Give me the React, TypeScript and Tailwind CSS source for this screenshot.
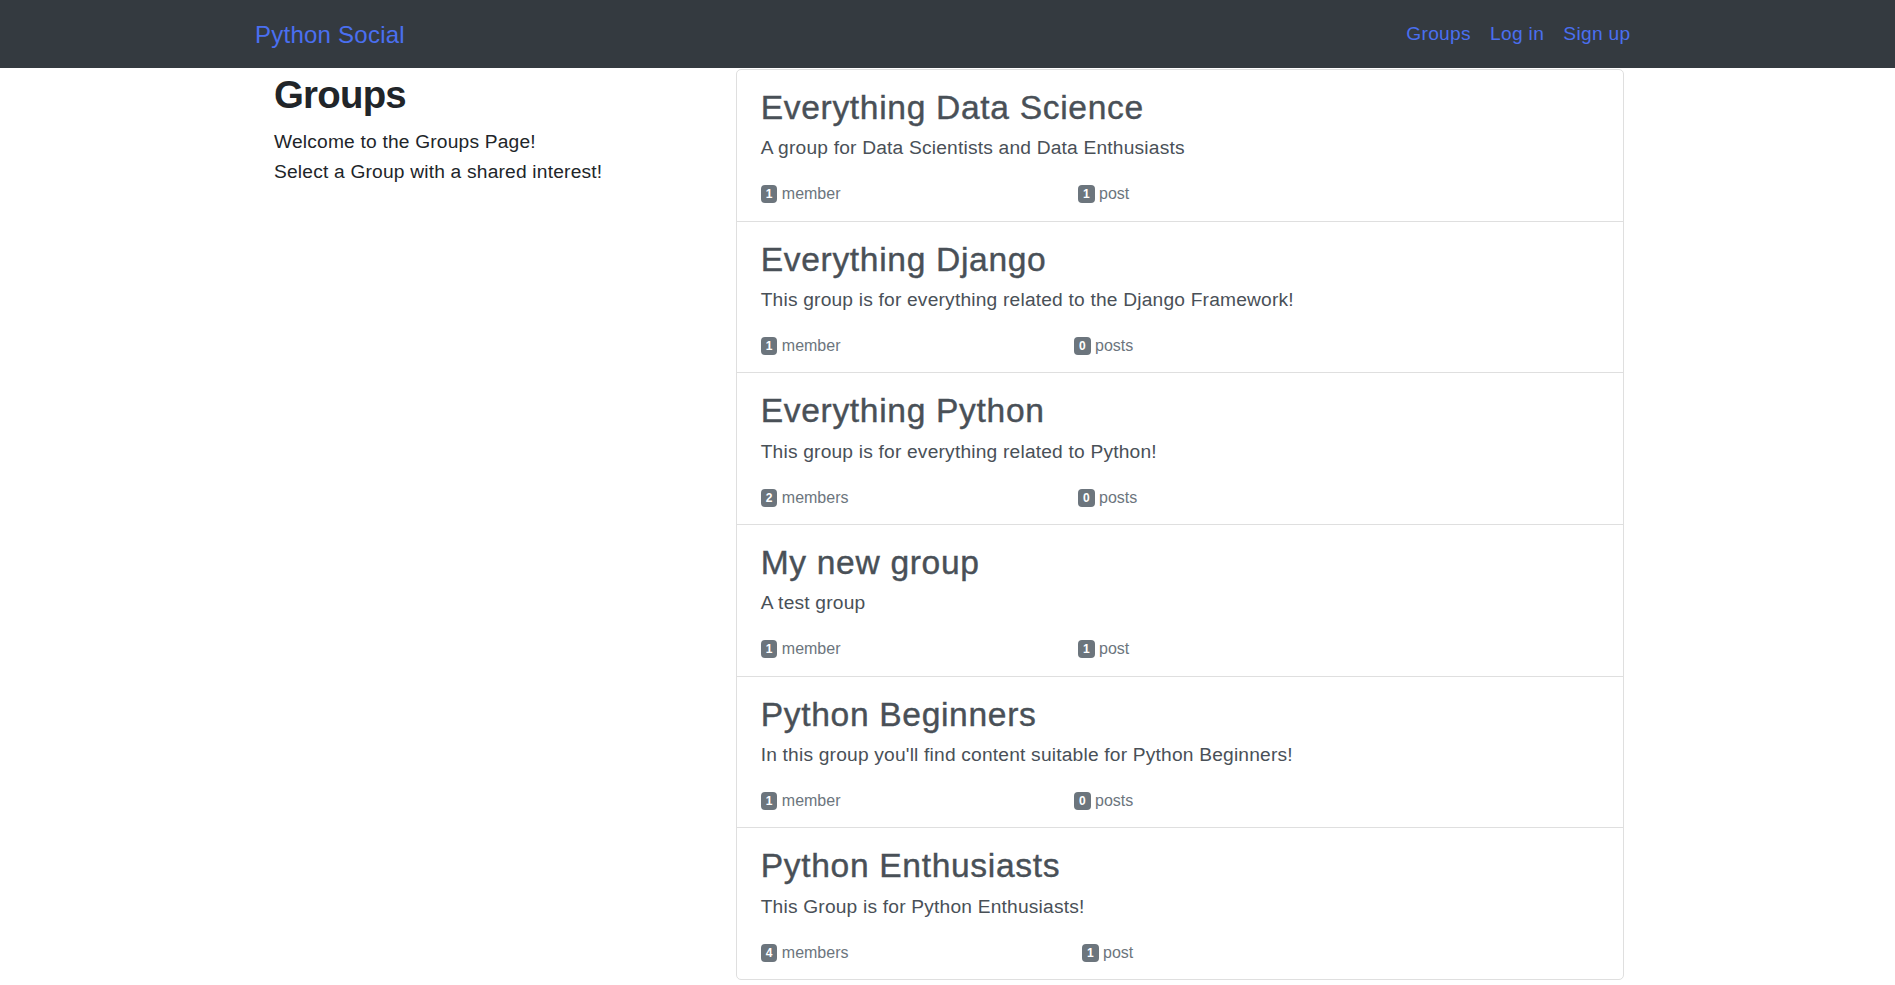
const groups = [
  { name: "Everything Data Science", about: "A group for Data Scientists and Data Enthusiasts", members: 1, posts: 1 },
  { name: "Everything Django", about: "This group is for everything related to the Django Framework!", members: 1, posts: 0 },
  { name: "Everything Python", about: "This group is for everything related to Python!", members: 2, posts: 0 },
  { name: "My new group", about: "A test group", members: 1, posts: 1 },
  { name: "Python Beginners", about: "In this group you'll find content suitable for Python Beginners!", members: 1, posts: 0 },
  { name: "Python Enthusiasts", about: "This Group is for Python Enthusiasts!", members: 4, posts: 1 },
];

function Count({ n, word }: { n: number; word: string }) {
  return (
    <span className="whitespace-nowrap">
      <span className="inline-block rounded-[4px] bg-[#6c757d] px-[5px] py-[3px] align-[1px] text-[12px] font-bold leading-none text-white">
        {n}
      </span>{" "}
      {word}
      {n === 1 ? "" : "s"}
    </span>
  );
}

export default function App() {
  return (
    <div className="min-h-screen bg-white font-['Liberation_Sans',Arial,sans-serif] text-[#212529]">
      <nav className="h-[68px] bg-[#343a40]">
        <div className="mx-auto flex h-full w-[1385px] items-center justify-between">
          <a href="#" className="pt-[1px] text-[24px] leading-[36px] tracking-[0.01em] text-[#4a6ff0]">
            Python Social
          </a>
          <ul className="flex pt-[1px] text-[19.2px] leading-[28.8px] tracking-[0.015em] text-[#4a6ff0]">
            <li><a href="#" className="block px-[9.6px]">Groups</a></li>
            <li><a href="#" className="block px-[9.6px]">Log in</a></li>
            <li><a href="#" className="block px-[9.6px]">Sign up</a></li>
          </ul>
        </div>
      </nav>

      <div className="mx-auto flex w-[1385px]">
        <div className="w-1/3 px-[19px] pt-[4px]">
          <h2 className="mb-[9px] text-[38.4px] font-bold leading-[1.2] tracking-[-0.02em]">Groups</h2>
          <p className="text-[19.2px] leading-[30px] tracking-[0.01em]">
            Welcome to the Groups Page!
            <br />
            Select a Group with a shared interest!
          </p>
        </div>

        <div className="w-2/3 pl-[19px] pr-[16px] pt-[1px]">
          <div className="overflow-hidden rounded-[5px] border border-[#dfdfdf]">
            {groups.map((g, i) => (
              <a
                key={g.name}
                href="#"
                className={
                  "block px-[24px] pt-[18px] pb-[15.4px] text-[#495057] " +
                  (i < groups.length - 1 ? "border-b border-[#dfdfdf]" : "")
                }
              >
                <h3 className="mb-[6px] text-[33.6px] leading-[1.2] tracking-[0.02em] [-webkit-text-stroke:0.4px_#495057]">
                  {g.name}
                </h3>
                <p className="mb-[19.2px] text-[19.2px] leading-[28.8px] tracking-[0.01em]">{g.about}</p>
                <div className="flex w-[606px] justify-between text-[16px] leading-[23px] text-[#6c757d]">
                  <Count n={g.members} word="member" />
                  <Count n={g.posts} word="post" />
                  <span />
                </div>
              </a>
            ))}
          </div>
        </div>
      </div>
    </div>
  );
}
